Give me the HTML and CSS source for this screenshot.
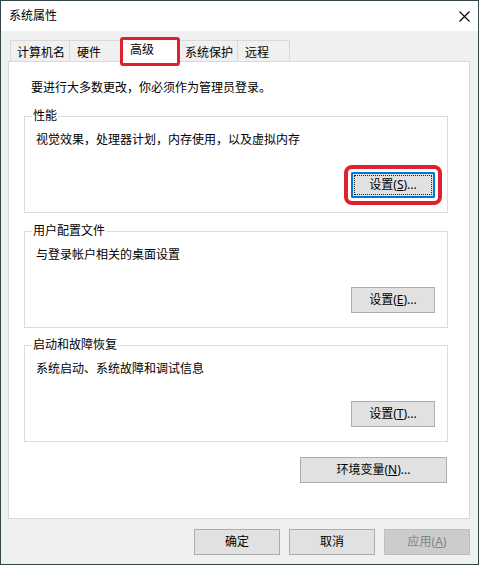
FILE: index.html
```html
<!DOCTYPE html>
<html lang="zh-CN">
<head>
    <meta charset="UTF-8">
    <meta name="viewport" content="width=device-width, initial-scale=1.0">
    <title>系统属性</title>
    <link rel="stylesheet" href="styles.css">
</head>
<body>
    <div class="window">
        <div class="titlebar">
            <span class="title">系统属性</span>
            <svg class="close" width="11" height="11" viewBox="0 0 11 11">
                <path d="M0.5 0.5 L10.5 10.5 M10.5 0.5 L0.5 10.5" stroke="#000" stroke-width="1.1" fill="none"/>
            </svg>
        </div>
        <div class="content">
            <div class="tabs">
                <div class="tab tab-name">计算机名</div>
                <div class="tab tab-hw">硬件</div>
                <div class="tab tab-adv active">高级</div>
                <div class="tab tab-prot">系统保护</div>
                <div class="tab tab-remote">远程</div>
            </div>
            <div class="panel">
                <p class="intro">要进行大多数更改，你必须作为管理员登录。</p>

                <fieldset class="group group-first">
                    <legend>性能</legend>
                    <p class="desc">视觉效果，处理器计划，内存使用，以及虚拟内存</p>
                    <div class="group-actions">
                        <button class="btn default marked"><span class="focus">设置(<u>S</u>)...</span></button>
                    </div>
                </fieldset>

                <fieldset class="group group-second">
                    <legend>用户配置文件</legend>
                    <p class="desc">与登录帐户相关的桌面设置</p>
                    <div class="group-actions">
                        <button class="btn">设置(<u>E</u>)...</button>
                    </div>
                </fieldset>

                <fieldset class="group group-third">
                    <legend>启动和故障恢复</legend>
                    <p class="desc">系统启动、系统故障和调试信息</p>
                    <div class="group-actions">
                        <button class="btn">设置(<u>T</u>)...</button>
                    </div>
                </fieldset>

                <div class="env-row">
                    <button class="btn btn-env">环境变量(<u>N</u>)...</button>
                </div>
            </div>
            <div class="footer">
                <button class="btn btn-dialog">确定</button>
                <button class="btn btn-dialog">取消</button>
                <button class="btn btn-dialog" disabled>应用(<u>A</u>)</button>
            </div>
        </div>
    </div>
</body>
</html>
```

FILE: styles.css
```css
* {
    box-sizing: border-box;
}

body {
    margin: 0;
    font-family: "Noto Sans", "Noto Sans CJK SC", sans-serif;
    font-size: 12px;
    line-height: 16px;
    color: #000;
}

.window {
    width: 479px;
    height: 565px;
    border: 1px solid #34464c;
    background-color: #f0f0f0;
    display: flex;
    flex-direction: column;
}

.titlebar {
    height: 30px;
    flex: none;
    background-color: #fff;
    display: flex;
    align-items: center;
    justify-content: space-between;
    padding: 0 8px 0 8px;
}

.close {
    display: block;
}

.content {
    padding: 6px 8px 0 7px;
}

/* tab strip */
.tabs {
    display: flex;
    align-items: flex-end;
    padding-left: 2px;
}

.tab {
    height: 21px;
    padding-top: 4px;
    border: 1px solid #d9d9d9;
    border-bottom: none;
    margin-left: -1px;
    background-color: #f0f0f0;
    white-space: nowrap;
}

.tab-name {
    width: 60px;
    padding-left: 6px;
    margin-left: 0;
}

.tab-hw {
    width: 52px;
    padding-left: 7px;
}

.tab-prot {
    width: 59px;
    padding-left: 5px;
}

.tab-remote {
    width: 53px;
    padding-left: 7px;
}

.tab.active {
    position: relative;
    z-index: 2;
    width: 60px;
    height: 29px;
    padding: 2px 0 0 7px;
    border: 3px solid #e2202c;
    border-radius: 3px;
    background-color: #fff;
    margin-bottom: -5px;
}

/* main page */
.panel {
    height: 458px;
    background-color: #fff;
    border: 1px solid #d9d9d9;
    padding: 18px 21px 0 15px;
    display: flex;
    flex-direction: column;
}

.intro {
    margin: 0 0 0 7px;
}

.group {
    margin: 0;
    padding: 0 12px 14px 7px;
    border: 1px solid #dcdcdc;
    min-width: 0;
}

.group legend {
    padding: 0 1px;
}

.group-first {
    margin-top: 12px;
}

.group-second {
    margin-top: 10px;
}

.group-third {
    margin-top: 9px;
}

.desc {
    margin: 8px 0 0 4px;
}

.group-actions {
    display: flex;
    justify-content: flex-end;
    margin-top: 24px;
}

.btn {
    height: 26px;
    width: 84px;
    font-family: inherit;
    font-size: 12px;
    line-height: 16px;
    color: #000;
    background-color: #e1e1e1;
    border: 1px solid #adadad;
    padding: 0;
}

.btn.default {
    border-color: #0078d7;
    box-shadow: inset 0 0 0 1px #0078d7;
    padding: 2px;
    display: flex;
}

.btn .focus {
    flex: 1;
    border: 1px dotted #222;
    display: flex;
    align-items: center;
    justify-content: center;
}

.btn.marked {
    outline: 4px solid #e2202c;
    outline-offset: 3px;
    border-radius: 1px;
}

.env-row {
    display: flex;
    justify-content: flex-end;
    margin-top: 15px;
    padding-right: 1px;
}

.btn-env {
    width: 147px;
}

.footer {
    display: flex;
    justify-content: flex-end;
    gap: 9px;
    margin-top: 10px;
}

.btn-dialog {
    width: 86px;
}

.btn:disabled {
    background-color: #cccccc;
    border-color: #bfbfbf;
    color: #838383;
}
```
